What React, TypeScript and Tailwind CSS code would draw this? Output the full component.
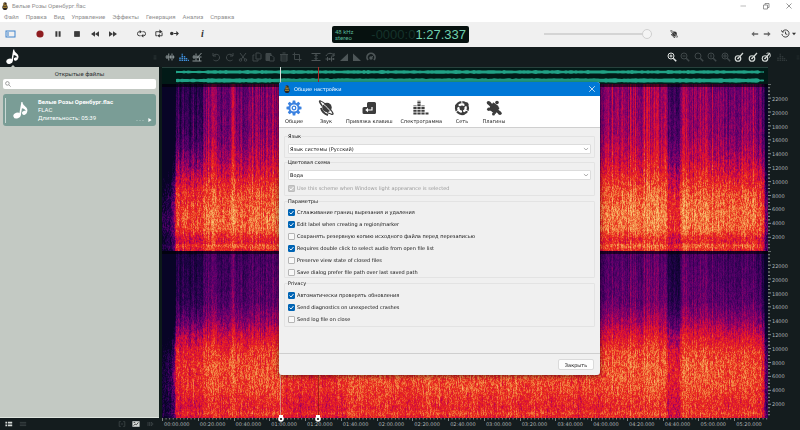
import { useLayoutEffect, useRef, useState } from "react";
import type { ReactNode } from "react";

/* ---------- helpers ---------- */

function makeRandom(seed: number) {
  let s = seed;
  return () => {
    s = (s * 1664525 + 1013904223) >>> 0;
    return s / 4294967296;
  };
}

const HEAT: [number, number, number, number][] = [
  [0, 8, 4, 38],
  [0.15, 34, 2, 74],
  [0.32, 92, 0, 108],
  [0.46, 158, 2, 96],
  [0.58, 216, 14, 56],
  [0.7, 232, 44, 30],
  [0.83, 240, 118, 60],
  [1, 250, 200, 118],
];

function heat(v: number): [number, number, number] {
  const t = Math.min(1, Math.max(0, v));
  for (let i = 1; i < HEAT.length; i++) {
    if (t <= HEAT[i][0]) {
      const a = HEAT[i - 1];
      const b = HEAT[i];
      const k = (t - a[0]) / (b[0] - a[0]);
      return [a[1] + (b[1] - a[1]) * k, a[2] + (b[2] - a[2]) * k, a[3] + (b[3] - a[3]) * k];
    }
  }
  return [250, 200, 118];
}

function curve(points: [number, number][], x: number) {
  for (let i = 1; i < points.length; i++) {
    if (x <= points[i][0]) {
      const [x0, y0] = points[i - 1];
      const [x1, y1] = points[i];
      return y0 + ((y1 - y0) * (x - x0)) / (x1 - x0);
    }
  }
  return points[points.length - 1][1];
}

/* energy by height (0 = 24 kHz, 1 = 0 Hz) for each channel */
const PROFILES: [number, number][][] = [
  [[0, 0.36], [0.3, 0.4], [0.45, 0.5], [0.55, 0.61], [0.65, 0.74], [0.78, 0.81], [0.87, 0.79], [0.92, 0.65], [0.95, 0.64], [0.96, 0.76], [0.975, 0.74], [1, 0.62]],
  [[0, 0.23], [0.3, 0.29], [0.42, 0.42], [0.5, 0.56], [0.6, 0.71], [0.7, 0.76], [0.82, 0.74], [0.9, 0.68], [0.95, 0.66], [0.97, 0.73], [1, 0.62]],
];

const LOUDNESS: [number, number][] = [
  [0, -0.85], [9, -0.75], [12, -0.5], [14, -0.1], [38, -0.1], [44, 0], [118, 0], [126, -0.09],
  [180, -0.09], [188, 0], [418, 0], [424, 0.03], [442, -0.03], [455, 0.01], [503, 0], [506, -0.17],
  [517, -0.17], [520, 0.04], [552, 0.01], [575, 0.02], [598, -0.03], [601, -0.15], [603, -0.6], [606, -0.7],
];

/* the first bars carry little treble */
const INTRO: [number, number][][] = [
  [[0, -0.12], [0.35, -0.1], [0.6, 0], [1, 0]],
  [[0, -0.03], [0.4, -0.03], [0.5, 0], [1, 0]],
];

function Spectrogram() {
  const ref = useRef<HTMLCanvasElement>(null);
  useLayoutEffect(() => {
    const canvas = ref.current;
    const ctx = canvas?.getContext("2d");
    if (!canvas || !ctx) return;
    const { width, height } = canvas;
    const image = ctx.createImageData(width, height);
    const rnd = makeRandom(77);
    const half = height / 2;
    const streak: number[] = [];
    const grain: number[] = new Array(width).fill(0);
    let drift = 0;
    for (let x = 0; x < width; x++) {
      drift = drift * 0.86 + (rnd() - 0.5) * 0.07;
      streak.push(drift + (rnd() - 0.5) * 0.13 + (rnd() > 0.9 ? 0.1 : 0));
    }
    for (let y = 0; y < height; y++) {
      const channel = y < half ? 0 : 1;
      const f = (y % half) / half;
      const base = curve(PROFILES[channel], f);
      const intro = curve(INTRO[channel], f);
      const weight = curve([[0, 1], [0.45, 1], [0.65, 0.55], [1, 0.5]], f) * (channel ? 0.75 : 1.15);
      const noise = curve([[0, 0.1], [0.35, 0.13], [0.6, 0.22], [1, 0.22]], f);
      for (let x = 0; x < width; x++) {
        grain[x] = grain[x] * 0.45 + (rnd() - 0.5) * 0.9;
        const quiet = curve(LOUDNESS, x);
        const lead = x > 12 ? Math.max(0, Math.min(1, (46 - x) / 8)) : 0;
        const v = base + quiet * (0.7 + (1 - f) * 0.3) + intro * lead + streak[x] * weight + grain[x] * noise;
        const edge = f < 0.012 ? 0.4 : 1;
        const [r, g, b] = heat(v);
        const i = (y * width + x) * 4;
        image.data[i] = r * edge;
        image.data[i + 1] = g * edge;
        image.data[i + 2] = b * edge;
        image.data[i + 3] = 255;
      }
    }
    ctx.putImageData(image, 0, 0);
  }, []);
  return <canvas ref={ref} width={606} height={334} className="block h-full w-full" aria-label="Spectrogram" />;
}

function band(center: number, size: number, seed: number) {
  const rnd = makeRandom(seed);
  const top: string[] = [];
  const bottom: string[] = [];
  for (let x = 14; x <= 602; x += 2) {
    const fade = x > 596 ? 0.4 : x < 46 ? 0.75 : 1;
    const h = (size - rnd() * 0.7) * fade;
    top.push(`${x},${(center - h).toFixed(1)}`);
    bottom.unshift(`${x},${(center + h).toFixed(1)}`);
  }
  return [...top, ...bottom].join(" ");
}

function Overview() {
  return (
    <svg viewBox="0 0 606 17" preserveAspectRatio="none" className="block h-full w-full">
      <rect width="606" height="17" fill="#021a17" />
      <rect y="0" width="606" height="1" fill="#26403b" />
      <polygon points={band(5, 1.9, 4)} fill="#21a286" />
      <polygon points={band(13.5, 2.3, 9)} fill="#21a286" />
      <rect x="118" width="1" height="17" fill="#d8dedb" />
      <rect x="156" width="1" height="17" fill="#b02a2a" />
    </svg>
  );
}

/* ---------- icons ---------- */

function Icon({ children, className = "h-[10px] w-[10px]", box = 20 }: { children: ReactNode; className?: string; box?: number }) {
  return (
    <svg viewBox={`0 0 ${box} ${box}`} className={`block shrink-0 ${className}`} fill="none" stroke="currentColor" strokeWidth="2">
      {children}
    </svg>
  );
}

const NoteIcon = ({ className = "" }: { className?: string }) => (
  <svg viewBox="0 0 26 30" className={`block shrink-0 ${className}`} fill="currentColor">
    <ellipse cx="7" cy="24.500" rx="6.500" ry="5" transform="rotate(-18 7 24.500)" />
    <ellipse cx="19.500" cy="20" rx="4" ry="3.400" transform="rotate(-18 19.500 20)" />
    <path d="M10.500 24 L14.500 1 H16.500 C16 7 25 9 25 15 C25 18 24 20 22.500 21 C23 15 20 13 15.500 12 L13.500 24 Z" />
  </svg>
);

const BeeIcon = () => (
  <Icon className="h-2 w-2">
    <circle cx="10" cy="5" r="4.5" fill="#3a2c1c" stroke="none" />
    <ellipse cx="10" cy="13" rx="6.5" ry="7" fill="#2c2620" stroke="none" />
    <path d="M6 8 L14 8 M5 13 L15 13" stroke="#d7a637" strokeWidth="2.4" />
    <circle cx="7.5" cy="4.5" r="1.4" fill="#e3b54c" stroke="none" />
  </Icon>
);

const GearIcon = () => (
  <Icon className="h-4 w-4" box={32}>
    {[0, 45, 90, 135, 180, 225, 270, 315].map((a) => (
      <path key={a} d="M12.500 6.5 L13.500 1 H18.500 L19.500 6.5 Z" fill="currentColor" stroke="none" transform={`rotate(${a} 16 16)`} />
    ))}
    <circle cx="16" cy="16" r="9" strokeWidth="3.6" />
    <circle cx="16" cy="16" r="3.6" strokeWidth="2.6" />
  </Icon>
);

const PlanetIcon = ({ className = "h-4 w-4" }: { className?: string }) => (
  <Icon className={className} box={32}>
    <circle cx="18" cy="15" r="9.5" fill="currentColor" stroke="none" />
    <path d="M9 7 C16 12 24 20 27 26" stroke="#fff" strokeWidth="2" />
    <path d="M9 13 C3 4 1 1 5 2 C12 4 27 19 30 27 C31 31 23 27 18 25" strokeWidth="2.6" />
    <path d="M6 16 C8 23 13 28 20 30" strokeWidth="4" />
  </Icon>
);

const KeyIcon = () => (
  <Icon className="h-4 w-4" box={32}>
    <path d="M15 4 H27 Q30 4 30 7 V25 Q30 28 27 28 H6 Q3 28 3 25 V17 Q3 14 6 14 H12 V7 Q12 4 15 4 Z" fill="currentColor" stroke="none" />
    <path d="M22 14 V20 H13" stroke="#fff" strokeWidth="2.4" />
    <path d="M14 15.500 L8.5 20 L14 24.500 Z" fill="#fff" stroke="none" />
  </Icon>
);

const SpectrumIcon = () => (
  <Icon className="h-4 w-4" box={32}>
    <path d="M4 29 V11" strokeWidth="6.500" strokeDasharray="4 1.5" />
    <path d="M12 29 V1" strokeWidth="6.500" strokeDasharray="4 1.5" />
    <path d="M20 29 V11" strokeWidth="6.500" strokeDasharray="4 1.5" />
    <path d="M28 29 V25" strokeWidth="6" strokeDasharray="4 1.5" />
  </Icon>
);

const NetworkIcon = () => (
  <Icon className="h-4 w-4" box={32}>
    <circle cx="16" cy="16" r="12" strokeWidth="4.5" />
    <circle cx="16" cy="16" r="5" fill="currentColor" stroke="none" />
    <path d="M16 16 L6 11 M16 16 L26 9 M16 16 L18 28" strokeWidth="2.5" />
    {[20, 140, 260].map((a) => (
      <path key={a} d="M10 1 L13 8" stroke="#fff" strokeWidth="1.8" transform={`rotate(${a} 16 16)`} />
    ))}
    <circle cx="5.5" cy="12" r="3.6" fill="currentColor" stroke="none" />
    <circle cx="25" cy="8.500" r="4" fill="currentColor" stroke="none" />
    <circle cx="18" cy="27" r="3.6" fill="currentColor" stroke="none" />
  </Icon>
);

const PuzzleIcon = () => (
  <Icon className="h-4 w-4" box={32}>
    <g fill="currentColor" stroke="none">
      <rect x="8" y="8" width="17" height="17" rx="1" transform="rotate(35 16.500 16.500)" />
      <path d="M3 8 L8 3 L16 12 L11 16 Z" />
      <circle cx="5" cy="5.500" r="3.600" />
      <path d="M22 17 L30 24 L26 29 L18 22 Z" />
      <circle cx="28" cy="26.500" r="3.400" />
      <circle cx="5.500" cy="18.500" r="3.400" />
      <circle cx="22" cy="5" r="3.600" />
      <circle cx="15" cy="28" r="3" />
    </g>
    <circle cx="28" cy="13" r="3" fill="#fff" stroke="none" />
    <circle cx="9" cy="25" r="2.600" fill="#fff" stroke="none" />
  </Icon>
);

const Wave = () => <Icon><path d="M1 10 H19 M4 6 V14 M7.5 3 V17 M11 7 V13 M14 3 V17 M17 7 V13" /></Icon>;
const Bars = () => <Icon className="h-[10px] w-[10px]"><path d="M2 18 V10 M6.500 18 V3 M11 18 V8 M15 18 V12 M19 18 V15" strokeWidth="3" strokeDasharray="2.600 1" /></Icon>;
const WaveBars = () => <Icon><path d="M1 10 H19 M4 6 V14 M8 3 V17 M12 7 V13 M19 2 L10 12 M1 18 H19 M15 11 V18" /></Icon>;
const Undo = () => <Icon><path d="M4 2 V8 H10 M4 8 C8 2 18 4 17 12 C16 18 9 19 5 16" /></Icon>;
const Redo = () => <Icon><path d="M16 2 V8 H10 M16 8 C12 2 2 4 3 12 C4 18 11 19 15 16" /></Icon>;
const Cut = () => <Icon><path d="M4 2 L14 15 M16 2 L6 15" /><circle cx="5" cy="16" r="2.500" /><circle cx="15" cy="16" r="2.500" /></Icon>;
const Copy = () => <Icon><path d="M8 2 H15 L18 5 V14 H8 Z M5 6 H2 V18 H12 V15" /></Icon>;
const Paste = () => <Icon><path d="M2 3 H12 V6 H8 V17 H2 Z" fill="currentColor" /><path d="M9 7 H14 L18 11 V18 H9 Z" /></Icon>;
const Trash = () => <Icon><path d="M4 6 H16 V18 H4 Z M2 5 H18 M7 2 H13 M4 10 H16 M4 14 H16" /></Icon>;
const Crop = () => <Icon><path d="M5 1 V15 H19 M1 5 H15 V19" /></Icon>;
const Normalize = () => <Icon><path d="M1 3 H19 M1 17 H19 M10 5 V15 M7 8 L10 5 L13 8 M7 12 L10 15 L13 12" /></Icon>;
const Reverse = () => <Icon><path d="M2 8 C5 1 15 1 18 7 M18 2 V8 H13 M1 14 H19 M5 10 V18 M9 12 V16 M13 9 V19 M17 12 V16" /></Icon>;
const FadeIn = () => <Icon><path d="M2 18 L18 3 V18 Z" fill="currentColor" stroke="none" /></Icon>;
const FadeOut = () => <Icon><path d="M18 18 L2 3 V18 Z" fill="currentColor" stroke="none" /></Icon>;
const Dial = () => <Icon><path d="M4 16 A8 8 0 1 1 16 16" strokeWidth="3.500" /><circle cx="10" cy="12" r="3.500" fill="currentColor" stroke="none" /><path d="M10 12 L15 7" /></Icon>;
const Mag = ({ mark }: { mark?: string }) => (
  <Icon><circle cx="8" cy="8" r="6" /><path d="M12.500 12.500 L18.500 18.500" strokeWidth="3" />{mark && <path d={mark} />}</Icon>
);
const Amp = ({ extra }: { extra?: boolean }) => (
  <Icon className="h-[10px] w-[10px]"><circle cx="8" cy="13" r="5.500" strokeWidth="2.400" /><path d="M8 13 L18 2" strokeWidth="2.400" /><circle cx="8" cy="13" r="1" fill="currentColor" />{extra && <path d="M11 3 C17 0 21 6 17 11" />}</Icon>
);
const Grip = () => <Icon className="h-[9px] w-[4px]" box={10}><path d="M3 0 V10 M7 0 V10" strokeWidth="2" strokeDasharray="2 1" /></Icon>;

function ToolButton({ label, children }: { label: string; children: ReactNode }) {
  return (
    <button type="button" aria-label={label} className="flex h-3 w-3 items-center justify-center">
      {children}
    </button>
  );
}

/* ---------- top of the window ---------- */

function TitleBar() {
  return (
    <header className="bg-white text-[6px] leading-[11px] text-[#8f8f8f]">
      <div className="flex h-[11px] items-center gap-[3px] pl-[1px]">
        <BeeIcon />
        <span className="flex-1">Белые Розы Оренбург.flac</span>
        <div className="flex items-center gap-[13px] pr-[6px] text-[#777]">
          <button type="button" aria-label="Свернуть"><Icon className="h-[10px] w-[10px]"><path d="M5 10 H16" strokeWidth="1" /></Icon></button>
          <button type="button" aria-label="Развернуть"><Icon className="h-[10px] w-[10px]"><path d="M5 8 H13 V16 H5 Z M8 8 V5 H16 V13 H13" strokeWidth="1.500" /></Icon></button>
          <button type="button" aria-label="Закрыть окно"><Icon className="h-[10px] w-[10px]"><path d="M5 5 L15 15 M15 5 L5 15" strokeWidth="1.500" /></Icon></button>
        </div>
      </div>
      <nav className="flex gap-[7px] pl-1">
        {["Файл", "Правка", "Вид", "Управление", "Эффекты", "Генерация", "Анализ", "Справка"].map((m) => (
          <button key={m} type="button">{m}</button>
        ))}
      </nav>
    </header>
  );
}

function TransportBar() {
  return (
    <div className="flex h-[25px] shrink-0 items-center bg-[#f0f0f0] text-[#333]">
      <div className="flex flex-1 items-center pb-[2px] pl-[5px]">
        <button type="button" aria-label="Панель файлов" className="flex w-[31px]">
          <svg viewBox="0 0 11 8" className="h-2 w-[11px]" fill="none" stroke="#3d82cc"><rect x="1" y="1" width="9" height="6" /><path d="M3 2 V6" /></svg>
        </button>
        <div className="flex flex-1 items-center">
          <div className="flex w-[81px] justify-between text-[#3a3a3a]">
            <button type="button" aria-label="Запись"><Icon className="h-2 w-2"><circle cx="10" cy="10" r="9" fill="#8f1d20" stroke="none" /></Icon></button>
            <button type="button" aria-label="Пауза"><Icon className="h-2 w-2"><path d="M6 3 V17 M14 3 V17" strokeWidth="5" /></Icon></button>
            <button type="button" aria-label="Стоп"><Icon className="h-2 w-2"><rect x="4" y="4" width="12" height="12" fill="currentColor" /></Icon></button>
            <button type="button" aria-label="Назад"><Icon className="h-2 w-2"><path d="M10 3 V17 L0 10 Z M20 3 V17 L10 10 Z" fill="currentColor" stroke="none" /></Icon></button>
            <button type="button" aria-label="Вперёд"><Icon className="h-2 w-2"><path d="M10 3 V17 L20 10 Z M0 3 V17 L10 10 Z" fill="currentColor" stroke="none" /></Icon></button>
          </div>
          <div className="ml-5 flex w-[42px] justify-between">
            <button type="button" aria-label="Повтор"><Icon className="h-[9px] w-[9px]"><path d="M8 15 H5 A4 4.500 0 0 1 5 6 H7 M12 6 H15 A4 4.500 0 0 1 15 15 H13" /><path d="M6 2 L11 6 L6 10 Z M14 11 L9 15 L14 19 Z" fill="currentColor" stroke="none" /></Icon></button>
            <button type="button" aria-label="Повтор выделения"><Icon className="h-[9px] w-[9px]"><path d="M7 15 H4 V6 H13 M18 8 V15 H12" /><path d="M12 1 L19 6 L12 10 Z M13 11 L7 15 L13 19 Z" fill="currentColor" stroke="none" /></Icon></button>
            <button type="button" aria-label="Следовать"><Icon className="h-[9px] w-[9px]"><circle cx="4" cy="10" r="4" fill="currentColor" stroke="none" /><path d="M9 10 H17 M14 6 L18 10 L14 14" strokeWidth="2.500" /></Icon></button>
          </div>
          <button type="button" aria-label="Сведения" className="ml-[22px] font-['Liberation_Serif',serif] text-[10px] font-bold italic leading-3">i</button>
        </div>
      </div>
      <div className="flex h-[17px] w-[137px] shrink-0 items-center justify-between rounded-[2px] bg-[#06110f] px-[3px]">
        <div className="text-[6px] leading-[6px] text-[#58b897]">48 kHz<br />stereo</div>
        <div className="font-['Liberation_Sans',sans-serif] text-[13px] leading-[17px] text-[#6fd0ae]">
          <span className="text-[#15332b]">-0000:0</span>1:27.337
        </div>
      </div>
      <div className="flex flex-1 items-center justify-end pb-[2px] pr-1">
        <div className="flex w-[108px] items-center">
          <input
            type="range" aria-label="Громкость" defaultValue={100}
            className="h-[10px] w-full appearance-none bg-transparent [&::-webkit-slider-runnable-track]:h-[2px] [&::-webkit-slider-runnable-track]:bg-[#d4d4d4] [&::-webkit-slider-thumb]:-mt-[4px] [&::-webkit-slider-thumb]:h-[10px] [&::-webkit-slider-thumb]:w-[10px] [&::-webkit-slider-thumb]:appearance-none [&::-webkit-slider-thumb]:rounded-full [&::-webkit-slider-thumb]:border [&::-webkit-slider-thumb]:border-[#d0d0d0] [&::-webkit-slider-thumb]:bg-[#f4f4f4]"
          />
        </div>
        <button type="button" aria-label="Монитор" className="ml-[18px]"><PlanetIcon className="h-2 w-2" /></button>
        <div className="ml-[73px] flex gap-1 text-[#666]">
          <button type="button" aria-label="Отменить"><Icon className="h-2 w-2"><path d="M1 10 L8 4 V8 H18 V12 H8 V16 Z" fill="currentColor" stroke="none" /></Icon></button>
          <button type="button" aria-label="Вернуть"><Icon className="h-2 w-2"><path d="M19 10 L12 4 V8 H2 V12 H12 V16 Z" fill="currentColor" stroke="none" /></Icon></button>
        </div>
        <button type="button" aria-label="История" className="ml-[10px] flex items-center gap-[2px]">
          <Icon className="h-[9px] w-[9px]"><path d="M3 6 A8 8 0 1 1 2 11 M1 3 L3 7 L7 6 M10 6 V11 L14 12" /></Icon>
          <Icon className="h-1 w-1" box={10}><path d="M0 2 H10 L5 8 Z" fill="currentColor" stroke="none" /></Icon>
        </button>
      </div>
    </div>
  );
}

function EditBar() {
  return (
    <div className="flex h-5 shrink-0 items-center bg-[#141c1e] text-[#3f4749]">
      <div className="flex w-40 shrink-0 items-center justify-between self-stretch pl-[6px] pr-[3px]">
        <div className="flex flex-col items-center justify-between self-stretch text-white">
          <button type="button" aria-label="Открытые файлы" className="pt-[2px]"><NoteIcon className="h-[15px] w-[13px]" /></button>
          <svg viewBox="0 0 4 2" className="h-[2px] w-1"><path d="M0 2 L2 0 L4 2 Z" fill="#c3c9c3" /></svg>
        </div>
        <Grip />
      </div>
      <div className="flex flex-1 items-center pl-[4px]">
        <div className="flex w-[39px] justify-between text-[#8b9496]">
          <ToolButton label="Волна"><Wave /></ToolButton>
          <span className="flex text-[#3f8fdc]"><ToolButton label="Спектр"><Bars /></ToolButton></span>
          <ToolButton label="Волна и спектр"><WaveBars /></ToolButton>
        </div>
        <div className="ml-[7px] flex w-[93px] justify-between">
          <ToolButton label="Отмена"><Undo /></ToolButton>
          <ToolButton label="Повторить"><Redo /></ToolButton>
          <ToolButton label="Вырезать"><Cut /></ToolButton>
          <ToolButton label="Копировать"><Copy /></ToolButton>
          <ToolButton label="Вставить"><Paste /></ToolButton>
          <ToolButton label="Удалить"><Trash /></ToolButton>
          <ToolButton label="Обрезать"><Crop /></ToolButton>
        </div>
        <div className="ml-[7px] flex w-[67px] justify-between text-[#4d5557]">
          <ToolButton label="Нормализовать"><Normalize /></ToolButton>
          <ToolButton label="Реверс"><Reverse /></ToolButton>
          <ToolButton label="Нарастание"><FadeIn /></ToolButton>
          <ToolButton label="Затухание"><FadeOut /></ToolButton>
          <ToolButton label="Усиление"><Dial /></ToolButton>
        </div>
      </div>
      <div className="flex items-center">
        <div className="flex w-[106px] justify-between">
          <span className="flex text-[#e2e5e3]"><ToolButton label="Увеличить"><Mag mark="M5 8 H11 M8 5 V11" /></ToolButton></span>
          <ToolButton label="Уменьшить"><Mag mark="M5 8 H11" /></ToolButton>
          <ToolButton label="Вписать"><Mag /></ToolButton>
          <ToolButton label="Масштаб 1:1"><Mag mark="M8 5 V11" /></ToolButton>
          <ToolButton label="К выделению"><Mag mark="M6 6 H10 V10 H6 Z" /></ToolButton>
          <span className="flex text-[#d5d9d7]"><ToolButton label="Усилить вид"><Amp /></ToolButton></span>
          <span className="flex text-[#d5d9d7]"><ToolButton label="Ослабить вид"><Amp /></ToolButton></span>
          <span className="flex text-[#d5d9d7]"><ToolButton label="Сбросить вид"><Amp extra /></ToolButton></span>
        </div>
        <div className="flex w-7 items-center justify-between pl-[5px] text-[#2f3739]"><Bars /><Grip /></div>
      </div>
    </div>
  );
}

/* ---------- main area ---------- */

function FilePanel() {
  return (
    <aside className="flex w-[159px] shrink-0 flex-col border-b border-[#dfe5df] bg-[#c3c9c3] px-[3px]">
      <h2 className="mt-px text-center text-[6px] leading-[11px] text-[#2f3332]">Открытые файлы</h2>
      <label className="flex h-[10px] items-center gap-[2px] rounded-[2px] bg-white px-[2px] text-[#666]">
        <Icon className="h-[6px] w-[6px]"><circle cx="8" cy="8" r="6" /><path d="M13 13 L19 19" /></Icon>
        <input type="search" aria-label="Поиск" className="min-w-0 flex-1 bg-transparent text-[6px] leading-2 outline-none" />
      </label>
      <article className="mt-[5px] flex h-8 items-center rounded-[3px] bg-[#7a9d96] px-[2px] text-white">
        <span className="h-[25px] w-px bg-[#c9d8d4]" />
        <NoteIcon className="ml-[7px] h-[18px] w-[15px]" />
        <div className="ml-[10px] flex-1 text-[6px] leading-2">
          <h3 className="font-bold">Белые Розы Оренбург.flac</h3>
          <p>FLAC</p>
          <p>Длительность: 05:39</p>
        </div>
        <button type="button" aria-label="Воспроизвести" className="mb-1 flex items-center gap-1 self-end">
          <svg viewBox="0 0 8 3" className="h-[3px] w-2" fill="none" stroke="#94b1ab"><path d="M0 1.500 H8" strokeDasharray="2 1" /></svg>
          <Icon className="mr-[2px] h-1 w-1" box={10}><path d="M1 0 L9 5 L1 10 Z" fill="currentColor" stroke="none" /></Icon>
        </button>
      </article>
    </aside>
  );
}

const KHZ = ["22000", "20000", "18000", "16000", "14000", "12000", "10000", "8000", "6000", "4000", "2000"];
const TIMES = ["00:00.000", "00:20.000", "00:40.000", "01:00.000", "01:20.000", "01:40.000", "02:00.000", "02:20.000", "02:40.000", "03:00.000", "03:20.000", "03:40.000", "04:00.000", "04:20.000", "04:40.000", "05:00.000", "05:20.000"];

function FrequencyScale() {
  return (
    <div className="flex flex-1 font-['DejaVu_Sans',sans-serif] text-[5px] leading-[6px] text-[#b0b6b6]">
      <svg viewBox="0 0 3 48" preserveAspectRatio="none" className="h-full w-[3px]">
        {Array.from({ length: 48 }, (_, i) => (
          <path key={i} d={`M0 ${i + 0.05} H${i % 4 === 0 ? 3 : 2}`} stroke="#8a9090" strokeWidth="0.3" />
        ))}
      </svg>
      <div className="flex flex-1 flex-col justify-around pb-[7px] pl-px pt-2">
        {KHZ.map((k) => <span key={k}>{k}</span>)}
      </div>
    </div>
  );
}

function Pin({ className }: { className: string }) {
  return (
    <svg viewBox="0 0 6 8" className={`absolute -bottom-1 h-2 w-[6px] ${className}`}>
      <path d="M1 1 H5 V4 H1 Z" fill="#fff" /><circle cx="3" cy="5" r="2.800" fill="#fff" /><circle cx="3" cy="5" r="1.100" fill="#111" />
    </svg>
  );
}

function Editor() {
  return (
    <main className="flex min-w-0 flex-1 bg-[#0d1a19] pl-[3px]">
      <div className="flex min-w-0 flex-1 flex-col">
        <div className="h-[17px] shrink-0"><Overview /></div>
        <div className="relative min-h-0 flex-1">
          <Spectrogram />
          <span className="absolute inset-y-0 left-[118px] w-px bg-[#c9c9c9]/50" />
          <span className="absolute inset-y-0 left-[156px] w-px bg-[#7a1010]/60" />
          <Pin className="left-[116px]" />
          <Pin className="left-[153px]" />
        </div>
      </div>
      <div className="flex w-8 shrink-0 flex-col bg-[#141c1e] pt-[17px]">
        <FrequencyScale />
        <FrequencyScale />
      </div>
    </main>
  );
}

function StatusBar() {
  return (
    <footer className="flex h-3 shrink-0 bg-[#141c1e] text-[#3f4749]">
      <div className="flex w-[162px] shrink-0 items-center justify-between px-[5px]">
        <div className="flex gap-[6px]">
          <button type="button" aria-label="Подробный список"><Icon className="h-2 w-2"><path d="M1 6 H5 M7 6 H18 M1 10 H5 M7 10 H18 M1 14 H5 M7 14 H18" stroke="#d5d9d7" strokeWidth="3" /></Icon></button>
          <button type="button" aria-label="Простой список"><Icon className="h-2 w-2"><path d="M2 6 H18 M2 10 H18 M2 14 H18" /></Icon></button>
        </div>
        <div className="flex gap-[6px] pr-[3px]">
          <Icon className="h-2 w-2"><path d="M7 4 H3 V16 H7 M13 4 H17 V16 H13 M7 10 H13" /></Icon>
          <Icon className="h-2 w-2"><rect x="1" y="3" width="18" height="14" fill="#d5d9d7" stroke="none" /><path d="M4 14 L8 10 L11 12 L16 6 M4 6 H8" stroke="#222" /></Icon>
          <Icon className="h-2 w-2"><path d="M5 5 V15 M9 5 V15 M13 5 L18 10 L13 15 Z" /></Icon>
        </div>
      </div>
      <div className="flex min-w-0 flex-1 font-['DejaVu_Sans',sans-serif] text-[5px] leading-[12px] text-[#b0b6b6]">
        {TIMES.map((t) => (
          <div key={t} className="min-w-0 flex-1">
            <svg viewBox="0 0 36 3" preserveAspectRatio="none" className="-mb-[3px] block h-[3px] w-full">
              {Array.from({ length: 10 }, (_, i) => (
                <path key={i} d={`M${i * 3.6 + 0.5} 0 V${i === 0 ? 3 : 1.5}`} stroke="#9aa0a0" strokeWidth="0.800" />
              ))}
            </svg>
            <span className="pl-[2px]">{t}</span>
          </div>
        ))}
      </div>
      <div className="w-[30px] shrink-0" />
    </footer>
  );
}

/* ---------- settings dialog ---------- */

function Check({ label, initial = false, disabled = false }: { label: string; initial?: boolean; disabled?: boolean }) {
  const [on, setOn] = useState(initial);
  return (
    <label className={`flex items-center gap-[2px] leading-[8px] ${disabled ? "text-[#9a9a9a]" : "text-[#111]"}`}>
      <span className="grid">
        <input
          type="checkbox" checked={on} disabled={disabled} onChange={(e) => setOn(e.target.checked)}
          className="col-start-1 row-start-1 h-[7px] w-[7px] appearance-none rounded-[1px] border border-[#b5b5b5] bg-[#f8f8f8] checked:border-[#0064b4] checked:bg-[#0064b4] disabled:border-[#bcbcbc] disabled:bg-[#c9c9c9]"
        />
        {on && (
          <svg viewBox="0 0 14 14" className="pointer-events-none col-start-1 row-start-1 h-[7px] w-[7px]" fill="none" stroke="#fff" strokeWidth="1.800">
            <path d="M3 7 L6 10 L11 4" />
          </svg>
        )}
      </span>
      <span>{label}</span>
    </label>
  );
}

function Combo({ label, value }: { label: string; value: string }) {
  return (
    <div className="grid">
      <select aria-label={label} className="col-start-1 row-start-1 h-[10px] w-full appearance-none rounded-[1px] border border-[#dcdcdc] bg-white pl-[1px] leading-[8px] text-[#111]">
        <option>{value}</option>
      </select>
      <Icon className="pointer-events-none col-start-1 row-start-1 mr-[2px] h-[6px] w-[6px] self-center justify-self-end text-[#777]"><path d="M3 7 L10 13 L17 7" /></Icon>
    </div>
  );
}

function Group({ title, children, className = "" }: { title: string; children: ReactNode; className?: string }) {
  return (
    <fieldset className={`rounded-[1px] border border-[#e3e3e3] px-[3px] ${className}`}>
      <legend className="leading-[8px] text-[#111]">{title}</legend>
      {children}
    </fieldset>
  );
}

function SettingsDialog() {
  const tabs: [string, ReactNode][] = [
    ["Общие", <GearIcon />],
    ["Звук", <PlanetIcon />],
    ["Привязка клавиш", <KeyIcon />],
    ["Спектрограмма", <SpectrumIcon />],
    ["Сеть", <NetworkIcon />],
    ["Плагины", <PuzzleIcon />],
  ];
  return (
    <section role="dialog" aria-label="Общие настройки" className="absolute left-[279px] top-[82px] w-[321px] overflow-hidden rounded-[3px] bg-[#f0f0f0] font-['DejaVu_Sans',sans-serif] text-[5px] shadow-[0_1px_5px_rgba(0,0,0,0.5)]">
      <header className="flex h-[14px] items-center gap-[3px] bg-[#0078d7] px-1 text-white">
        <BeeIcon />
        <h1 className="flex-1 text-[5px] leading-[8px]">Общие настройки</h1>
        <button type="button" aria-label="Закрыть настройки"><Icon className="h-2 w-2"><path d="M3 3 L17 17 M17 3 L3 17" strokeWidth="1.800" /></Icon></button>
      </header>
      <nav className="flex gap-2 border-b border-[#cfcfcf] bg-white pb-[2px] pl-[3px] pt-1 leading-[8px] text-[#222]">
        {tabs.map(([name, icon], i) => (
          <button key={name} type="button" className="flex min-w-6 flex-col items-center gap-px">
            <span className={i === 0 ? "text-[#3b82e0]" : "text-[#3c3c3c]"}>{icon}</span>
            <span className="whitespace-nowrap">{name}</span>
          </button>
        ))}
      </nav>
      <div className="flex flex-col px-[5px] pt-1">
        <Group title="Язык" className="pb-[3px] pt-1">
          <Combo label="Язык" value="Язык системы (Русский)" />
        </Group>
        <Group title="Цветовая схема" className="pb-[3px] pt-1">
          <Combo label="Цветовая схема" value="Вода" />
          <div className="pt-1"><Check label="Use this scheme when Windows light appearance is selected" initial disabled /></div>
        </Group>
        <Group title="Параметры" className="mt-px pb-px pt-[3px]">
          <div className="flex flex-col gap-1">
            <Check label="Сглаживание границ вырезания и удаления" initial />
            <Check label="Edit label when creating a region/marker" initial />
            <Check label="Сохранять резервную копию исходного файла перед перезаписью" />
            <Check label="Requires double click to select audio from open file list" initial />
            <Check label="Preserve view state of closed files" />
            <Check label="Save dialog prefer file path over last saved path" />
          </div>
        </Group>
        <Group title="Privacy" className="mt-px pb-[3px] pt-1">
          <div className="flex flex-col gap-1">
            <Check label="Автоматически проверять обновления" initial />
            <Check label="Send diagnostics on unexpected crashes" initial />
            <Check label="Send log file on close" />
          </div>
        </Group>
      </div>
      <footer className="mt-[26px] flex justify-end border-t border-[#cfcfcf] px-[6px] py-[5px]">
        <button type="button" className="h-[11px] w-9 rounded-[2px] border border-[#dadada] bg-[#fdfdfd] leading-[8px] text-[#111]">Закрыть</button>
      </footer>
    </section>
  );
}

export default function App() {
  return (
    <div className="relative flex h-screen flex-col overflow-hidden bg-[#141c1e] font-[Roboto,'Noto_Sans',sans-serif]">
      <TitleBar />
      <TransportBar />
      <EditBar />
      <div className="flex min-h-0 flex-1">
        <FilePanel />
        <Editor />
      </div>
      <StatusBar />
      <SettingsDialog />
    </div>
  );
}
